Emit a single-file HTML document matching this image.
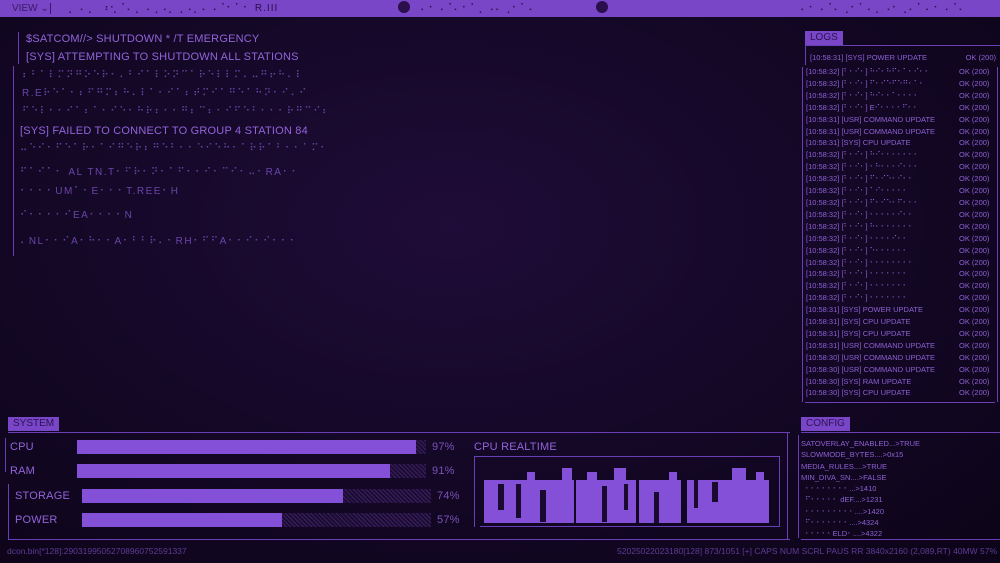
<!DOCTYPE html>
<html><head><meta charset="utf-8"><style>
*{margin:0;padding:0;box-sizing:border-box}
body{width:1000px;height:563px;overflow:hidden;background:radial-gradient(ellipse at 45% 40%,#1f0c38 0%,#150828 45%,#0c0418 100%);font-family:"Liberation Sans","DejaVu Sans",sans-serif;color:#8a5cd0;position:relative}
.a{position:absolute;white-space:nowrap}
.top{position:absolute;left:0;top:0;width:1000px;height:17px;background:#7846c6;color:#2a0f4c;font-size:10px;line-height:17px}
.t{font-size:11px;color:#9264da;letter-spacing:0.2px}
.d{font-size:10px;color:#6a45a8;letter-spacing:1.5px}
.log{font-size:7.5px;color:#8e60d4;line-height:11.9px}
.bar{position:absolute;height:14px;background:#8450d8}
.bg{position:absolute;height:14px;background:repeating-linear-gradient(45deg,#3a2060 0 1px,#1c0c32 1px 3px)}
.lab{position:absolute;background:#7846c6;color:#2e1055;font-size:10px;padding:1px 5px;line-height:12px}
.ln{position:absolute;background:#6a3fb5}
</style></head><body>
<div class="top">
<span class="a" style="left:12px;color:#3a1a66">VIEW ⌄</span>
<span class="a" style="left:68px;letter-spacing:1px">⡀⠠⢀⠀⠰⢂⠈⠄⡀⠠⢀⠠⡀⢀⠠⡀⠄⠠⠈⠂⠁⠂ R.III</span>
<span class="a" style="left:420px;letter-spacing:1px">⠄⠂⠠⠈⠄⠂⠁⡀⠠⠄⢀⠂⠁⠄</span>
<span class="a" style="left:800px;letter-spacing:1px">⠄⠂⠠⠈⠄⢀⠂⠁⠄⡀⠠⠂⢀⠄⠁⠄⠂⠠⠈⠄</span>
</div>
<div class="a" style="left:398px;top:1px;width:12px;height:12px;border-radius:50%;background:#2a0f4c"></div>
<div class="a" style="left:596px;top:1px;width:12px;height:12px;border-radius:50%;background:#2a0f4c"></div>
<div class="ln" style="left:50px;top:3px;width:1px;height:11px;background:#3a1a66"></div>

<div class="ln" style="left:18px;top:32px;width:1px;height:32px"></div>
<div class="ln" style="left:13px;top:66px;width:1px;height:190px"></div>
<div class="a t" style="left:26px;top:33px">$SATCOM//&gt; SHUTDOWN * /T EMERGENCY</div>
<div class="a t" style="left:26px;top:51px">[SYS] ATTEMPTING TO SHUTDOWN ALL STATIONS</div>
<div class="a d" style="left:22px;top:70px">⠆⠃⠁⠇⠍⠝⠛⠕⠑⠗⠂⠄⠃⠊⠁⠇⠕⠝⠉⠁⠗⠑⠇⠇⠍⠄⠤⠛⠖⠓⠄⠇</div>
<div class="a d" style="left:22px;top:88px">R.E⠗⠑⠁⠂⠆⠋⠛⠍⠆⠓⠄⠇⠁⠂⠊⠁⠆⠞⠍⠊⠁⠛⠑⠁⠓⠝⠂⠊⠄⠊</div>
<div class="a d" style="left:22px;top:106px">⠋⠑⠇⠂⠂⠊⠁⠆⠁⠂⠊⠑⠂⠓⠗⠆⠂⠂⠛⠆⠉⠆⠂⠊⠋⠑⠃⠂⠂⠂⠗⠛⠉⠊⠆</div>
<div class="a t" style="left:20px;top:125px">[SYS] FAILED TO CONNECT TO GROUP 4 STATION 84</div>
<div class="a d" style="left:20px;top:143px">⠤⠑⠊⠂⠋⠑⠁⠗⠂⠁⠊⠛⠑⠗⠆⠛⠑⠃⠂⠂⠑⠊⠑⠓⠂⠁⠗⠗⠁⠃⠂⠂⠁⠍⠂</div>
<div class="a d" style="left:20px;top:167px">⠋⠁⠊⠁⠂ AL TN.T⠂⠋⠗⠂⠝⠂⠁⠋⠂⠂⠊⠂⠉⠊⠂⠤⠂RA⠂⠂</div>
<div class="a d" style="left:20px;top:186px">⠂⠂⠂⠂UM⠁⠂E⠂⠂⠂T.REE⠂H</div>
<div class="a d" style="left:20px;top:210px">⠊⠂⠂⠂⠂⠊EA⠂⠂⠂⠂N</div>
<div class="a d" style="left:20px;top:236px">⠄NL⠂⠂⠊A⠂⠓⠂⠂A⠂⠃⠃⠗⠄⠂RH⠂⠋⠋A⠂⠂⠊⠂⠊⠂⠂⠂</div>

<!-- LOGS -->
<div class="lab" style="left:805px;top:31px">LOGS</div>
<div class="ln" style="left:805px;top:45px;width:195px;height:1px"></div>
<div class="ln" style="left:805px;top:45px;width:1px;height:20px"></div>
<div class="ln" style="left:802px;top:67px;width:1px;height:335px"></div>
<div class="ln" style="left:997px;top:67px;width:1px;height:335px"></div>
<div class="ln" style="left:805px;top:402px;width:190px;height:1px"></div>
<div class="a log" style="left:810px;top:52px;width:186px">[10:58:31] [SYS] POWER UPDATE<span style="float:right">OK (200)</span></div>
<div class="a log" style="left:806px;top:66px;width:162px">
[10:58:32] [⠃⠂⠊⠂] ⠓⠊⠂⠓⠋⠂⠁⠂⠊⠂⠂<br>[10:58:32] [⠃⠂⠊⠂] ⠋⠂⠊⠑⠋⠑⠛⠂⠁⠂<br>[10:58:32] [⠃⠂⠊⠂] ⠓⠊⠂⠂⠁⠂⠂⠂⠂<br>[10:58:32] [⠃⠂⠊⠂] E⠊⠂⠂⠂⠂⠋⠂⠂<br>[10:58:31] [USR] COMMAND UPDATE<br>[10:58:31] [USR] COMMAND UPDATE<br>[10:58:31] [SYS] CPU UPDATE<br>[10:58:32] [⠃⠂⠊⠂] ⠓⠊⠂⠂⠂⠂⠂⠂⠂<br>[10:58:32] [⠃⠂⠊⠂] ⠂⠓⠂⠂⠂⠊⠂⠂⠂<br>[10:58:32] [⠃⠂⠊⠂] ⠋⠂⠊⠑⠂⠊⠂⠂<br>[10:58:32] [⠃⠂⠊⠂] ⠁⠊⠂⠂⠂⠂⠂<br>[10:58:32] [⠃⠂⠊⠂] ⠋⠂⠊⠑⠂⠋⠂⠂⠂<br>[10:58:32] [⠃⠂⠊⠂] ⠂⠂⠂⠂⠂⠊⠂⠂<br>[10:58:32] [⠃⠂⠊⠂] ⠓⠂⠂⠂⠂⠂⠂⠂<br>[10:58:32] [⠃⠂⠊⠂] ⠂⠂⠂⠂⠊⠂⠂<br>[10:58:32] [⠃⠂⠊⠂] ⠑⠂⠂⠂⠂⠂⠂<br>[10:58:32] [⠃⠂⠊⠂] ⠂⠂⠂⠂⠂⠂⠂⠂<br>[10:58:32] [⠃⠂⠊⠂] ⠂⠂⠂⠂⠂⠂⠂<br>[10:58:32] [⠃⠂⠊⠂] ⠂⠂⠂⠂⠂⠂⠂<br>[10:58:32] [⠃⠂⠊⠂] ⠂⠂⠂⠂⠂⠂⠂<br>[10:58:31] [SYS] POWER UPDATE<br>[10:58:31] [SYS] CPU UPDATE<br>[10:58:31] [SYS] CPU UPDATE<br>[10:58:31] [USR] COMMAND UPDATE<br>[10:58:30] [USR] COMMAND UPDATE<br>[10:58:30] [USR] COMMAND UPDATE<br>[10:58:30] [SYS] RAM UPDATE<br>[10:58:30] [SYS] CPU UPDATE</div>
<div class="a log" style="left:959px;top:66px">OK (200)<br>OK (200)<br>OK (200)<br>OK (200)<br>OK (200)<br>OK (200)<br>OK (200)<br>OK (200)<br>OK (200)<br>OK (200)<br>OK (200)<br>OK (200)<br>OK (200)<br>OK (200)<br>OK (200)<br>OK (200)<br>OK (200)<br>OK (200)<br>OK (200)<br>OK (200)<br>OK (200)<br>OK (200)<br>OK (200)<br>OK (200)<br>OK (200)<br>OK (200)<br>OK (200)<br>OK (200)</div>

<!-- SYSTEM -->
<div class="lab" style="left:8px;top:417px">SYSTEM</div>
<div class="ln" style="left:8px;top:432px;width:782px;height:1px"></div>
<div class="ln" style="left:8px;top:539px;width:782px;height:1px"></div>
<div class="ln" style="left:5px;top:438px;width:1px;height:34px"></div>
<div class="ln" style="left:8px;top:484px;width:1px;height:55px"></div>
<div class="ln" style="left:787px;top:432px;width:1px;height:108px"></div>
<div class="a t" style="left:10px;top:441px">CPU</div>
<div class="a t" style="left:10px;top:465px">RAM</div>
<div class="a t" style="left:15px;top:490px">STORAGE</div>
<div class="a t" style="left:15px;top:514px">POWER</div>
<div class="bg" style="left:77px;top:440px;width:349px"></div><div class="bar" style="left:77px;top:440px;width:339px"></div>
<div class="bg" style="left:77px;top:464px;width:349px"></div><div class="bar" style="left:77px;top:464px;width:313px"></div>
<div class="bg" style="left:82px;top:489px;width:349px"></div><div class="bar" style="left:82px;top:489px;width:261px"></div>
<div class="bg" style="left:82px;top:513px;width:349px"></div><div class="bar" style="left:82px;top:513px;width:200px"></div>
<div class="a t" style="left:432px;top:441px;color:#7a52b8">97%</div>
<div class="a t" style="left:432px;top:465px;color:#7a52b8">91%</div>
<div class="a t" style="left:437px;top:490px;color:#7a52b8">74%</div>
<div class="a t" style="left:437px;top:514px;color:#7a52b8">57%</div>

<div class="a t" style="left:474px;top:441px">CPU REALTIME</div>
<div class="a" style="left:474px;top:456px;width:306px;height:71px;border:1px solid #6a3fb5;border-bottom:none"></div>
<div class="a" style="left:480px;top:526px;width:300px;height:1px;background:#6a3fb5"></div>
<svg class="a" style="left:484px;top:468px" width="290" height="55" viewBox="0 0 290 55">
<g fill="#8450d8">
<rect x="0" y="12" width="90" height="43"/><rect x="92" y="12" width="60" height="43"/><rect x="155" y="12" width="42" height="43"/><rect x="203" y="12" width="82" height="43"/>
<rect x="43" y="4" width="8" height="10"/><rect x="78" y="0" width="10" height="14"/><rect x="103" y="4" width="10" height="10"/><rect x="130" y="0" width="12" height="14"/><rect x="248" y="0" width="14" height="14"/><rect x="272" y="4" width="8" height="10"/><rect x="185" y="4" width="8" height="10"/>
</g>
<g fill="#1a0a30">
<rect x="14" y="16" width="6" height="26"/><rect x="32" y="16" width="5" height="34"/><rect x="56" y="22" width="6" height="32"/><rect x="118" y="18" width="5" height="36"/><rect x="140" y="16" width="4" height="26"/><rect x="170" y="24" width="5" height="31"/><rect x="228" y="14" width="6" height="20"/><rect x="210" y="12" width="4" height="28"/>
</g></svg>

<!-- CONFIG -->
<div class="lab" style="left:801px;top:417px">CONFIG</div>
<div class="ln" style="left:801px;top:432px;width:199px;height:1px"></div>
<div class="ln" style="left:798px;top:435px;width:1px;height:103px"></div>
<div class="ln" style="left:801px;top:539px;width:199px;height:1px"></div>
<div class="a log" style="left:801px;top:438px;line-height:11.3px;font-size:7.5px">SATOVERLAY_ENABLED...&gt;TRUE<br>SLOWMODE_BYTES....&gt;0x15<br>MEDIA_RULES....&gt;TRUE<br>MIN_DIVA_SN....&gt;FALSE<br>&nbsp;&nbsp;⠂⠂⠂⠂⠂⠂⠂⠂...&gt;1410<br>&nbsp;&nbsp;⠋⠂⠂⠂⠂⠂ dEF....&gt;1231<br>&nbsp;&nbsp;⠂⠂⠂⠂⠂⠂⠂⠂⠂....&gt;1420<br>&nbsp;&nbsp;⠋⠂⠂⠂⠂⠂⠂⠂....&gt;4324<br>&nbsp;&nbsp;⠂⠂⠂⠂⠂ELD⠂....&gt;4322</div>

<div class="a" style="left:7px;top:546px;font-size:8.5px;color:#5e3c96">dcon.bin[*128]:29031995052708960752591337</div>
<div class="a" style="right:3px;top:546px;font-size:8.5px;color:#5e3c96">52025022023180[128] 873/1051 [+] CAPS NUM SCRL PAUS RR 3840x2160 (2,089,RT) 40MW 57%</div>
</body></html>
